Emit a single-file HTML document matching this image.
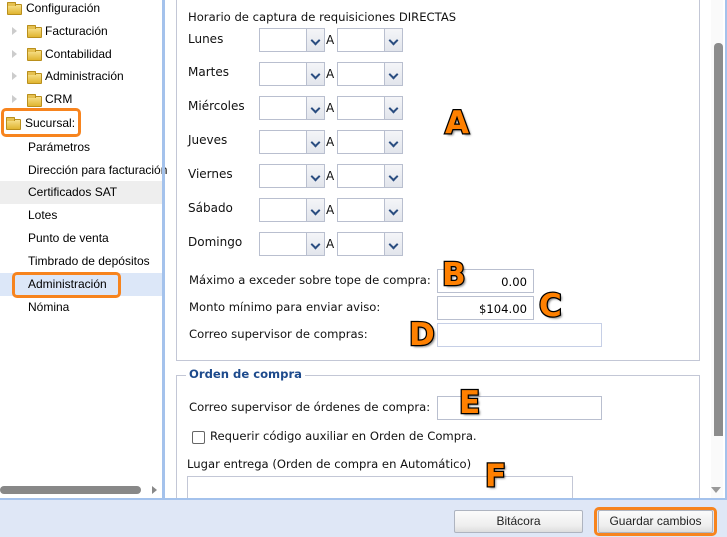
<!DOCTYPE html><html><head><style>
*{margin:0;padding:0;box-sizing:border-box}
body{width:727px;height:537px;overflow:hidden;background:#fff;position:relative;font-family:"Liberation Sans",Arial,sans-serif;font-size:12px;color:#000}
.a{position:absolute;white-space:nowrap}
.f{font-family:"DejaVu Sans",Verdana,sans-serif;font-size:11.6px;color:#111}
.fold{position:absolute;width:15px;height:11px;background:linear-gradient(#f7e08a,#e0b530);border:1px solid #b98f1c;border-radius:1px}
.fold:before{content:"";position:absolute;left:-1px;top:-3px;width:7px;height:3px;background:#e5c050;border:1px solid #b98f1c;border-bottom:none;border-radius:1px 1px 0 0}
.tri{position:absolute;width:0;height:0;border-left:5px solid #ccc;border-top:4px solid transparent;border-bottom:4px solid transparent}
.sel{position:absolute;width:66px;height:24px;border:1px solid #b9bfcf;background:#fff}
.sel i{position:absolute;right:0;top:0;width:18px;height:22px;background:linear-gradient(#f4f5f8,#e2e5ec);border-left:1px solid #b9bfcf}
.sel i:after{content:"";position:absolute;left:5px;top:8px;width:5px;height:5px;border-right:2px solid #2a4d80;border-bottom:2px solid #2a4d80;transform:rotate(45deg)}
.inp{position:absolute;height:24px;border:1px solid #b9bfcf;background:#fff;font-family:"DejaVu Sans",Verdana,sans-serif;font-size:11.6px;text-align:right;padding:5px 6px 0 0}
.L{position:absolute;font:900 31px "DejaVu Sans","Liberation Sans",Arial,sans-serif;color:#ff8000;-webkit-text-stroke:2.5px #000;paint-order:stroke fill;text-shadow:2px 2px 2px rgba(0,0,0,.5);line-height:1}
.ob{position:absolute;border:3px solid #f7841e;border-radius:5px}
.fs{position:absolute;border-style:solid;border-color:#c3c7d6;border-width:1px}
</style></head><body>
<div class="fold" style="left:7px;top:4px"></div><div class="a" style="left:26px;top:1px">Configuración</div>
<div class="tri" style="left:12px;top:27px"></div><div class="fold" style="left:27px;top:27px"></div><div class="a" style="left:45px;top:24px">Facturación</div>
<div class="tri" style="left:12px;top:50px"></div><div class="fold" style="left:27px;top:50px"></div><div class="a" style="left:45px;top:47px">Contabilidad</div>
<div class="tri" style="left:12px;top:72px"></div><div class="fold" style="left:27px;top:73px"></div><div class="a" style="left:45px;top:69px">Administración</div>
<div class="tri" style="left:12px;top:95px"></div><div class="fold" style="left:27px;top:96px"></div><div class="a" style="left:45px;top:92px">CRM</div>
<div class="fold" style="left:6px;top:119px"></div><div class="a" style="left:25px;top:116px">Sucursal:</div>
<div class="ob" style="left:1px;top:108px;width:80px;height:29px"></div>
<div class="a" style="left:28px;top:140px">Parámetros</div>
<div class="a" style="left:28px;top:163px">Dirección para facturación</div>
<div class="a" style="left:0;top:181px;width:163px;height:23px;background:#eeeeee"></div>
<div class="a" style="left:28px;top:185px">Certificados SAT</div>
<div class="a" style="left:28px;top:208px">Lotes</div>
<div class="a" style="left:28px;top:231px">Punto de venta</div>
<div class="a" style="left:28px;top:254px">Timbrado de depósitos</div>
<div class="a" style="left:0;top:273px;width:163px;height:23px;background:#dce7f8"></div>
<div class="a" style="left:28px;top:277px">Administración</div>
<div class="ob" style="left:12px;top:272px;width:109px;height:26px"></div>
<div class="a" style="left:28px;top:300px">Nómina</div>
<div class="a" style="left:0;top:486px;width:141px;height:8px;background:#888;border-radius:4px"></div>
<div class="tri" style="left:152px;top:486px;border-left-color:#888"></div>
<div class="a" style="left:162px;top:0;width:3px;height:500px;background:#a4c2ec"></div>
<div class="fs" style="left:176px;top:-1px;width:524px;height:362px"></div>
<div class="a f" style="left:188px;top:10px">Horario de captura de requisiciones DIRECTAS</div>
<div class="a f" style="left:188px;top:32px;font-size:12px">Lunes</div>
<div class="a f" style="left:188px;top:65px;font-size:12px">Martes</div>
<div class="a f" style="left:188px;top:99px;font-size:12px">Miércoles</div>
<div class="a f" style="left:188px;top:133px;font-size:12px">Jueves</div>
<div class="a f" style="left:188px;top:167px;font-size:12px">Viernes</div>
<div class="a f" style="left:188px;top:201px;font-size:12px">Sábado</div>
<div class="a f" style="left:188px;top:235px;font-size:12px">Domingo</div>
<div class="sel" style="left:259px;top:28px"><i></i></div><div class="a f" style="left:326px;top:33px;font-size:12px">A</div><div class="sel" style="left:337px;top:28px"><i></i></div>
<div class="sel" style="left:259px;top:62px"><i></i></div><div class="a f" style="left:326px;top:67px;font-size:12px">A</div><div class="sel" style="left:337px;top:62px"><i></i></div>
<div class="sel" style="left:259px;top:96px"><i></i></div><div class="a f" style="left:326px;top:101px;font-size:12px">A</div><div class="sel" style="left:337px;top:96px"><i></i></div>
<div class="sel" style="left:259px;top:130px"><i></i></div><div class="a f" style="left:326px;top:135px;font-size:12px">A</div><div class="sel" style="left:337px;top:130px"><i></i></div>
<div class="sel" style="left:259px;top:164px"><i></i></div><div class="a f" style="left:326px;top:169px;font-size:12px">A</div><div class="sel" style="left:337px;top:164px"><i></i></div>
<div class="sel" style="left:259px;top:198px"><i></i></div><div class="a f" style="left:326px;top:203px;font-size:12px">A</div><div class="sel" style="left:337px;top:198px"><i></i></div>
<div class="sel" style="left:259px;top:232px"><i></i></div><div class="a f" style="left:326px;top:237px;font-size:12px">A</div><div class="sel" style="left:337px;top:232px"><i></i></div>
<div class="a f" style="left:189px;top:273px">Máximo a exceder sobre tope de compra:</div>
<div class="inp" style="left:437px;top:269px;width:97px">0.00</div>
<div class="a f" style="left:189px;top:300px">Monto mínimo para enviar aviso:</div>
<div class="inp" style="left:437px;top:296px;width:97px">$104.00</div>
<div class="a f" style="left:189px;top:327px">Correo supervisor de compras:</div>
<div class="inp" style="left:437px;top:323px;width:165px;border-color:#c6cfe6;background:#fff"></div>
<div class="fs" style="left:176px;top:375px;width:524px;height:130px"></div>
<div class="a f" style="left:186px;top:367px;padding:0 3px;background:#fff;color:#1d4a8c;font-weight:bold">Orden de compra</div>
<div class="a f" style="left:189px;top:400px">Correo supervisor de órdenes de compra:</div>
<div class="inp" style="left:437px;top:396px;width:165px"></div>
<div class="a" style="left:192px;top:431px;width:13px;height:13px;border:1px solid #666;border-radius:2px;background:#fff"></div>
<div class="a f" style="left:210px;top:429px">Requerir código auxiliar en Orden de Compra.</div>
<div class="a f" style="left:187px;top:457px">Lugar entrega (Orden de compra en Automático)</div>
<div class="a" style="left:187px;top:476px;width:386px;height:30px;border:1px solid #c3c7d6;background:#fff"></div>
<div class="a" style="left:711px;top:0;width:12px;height:500px;background:#fafafa"></div>
<div class="a" style="left:714px;top:43px;width:9px;height:393px;background:#8c8c8c;border-radius:4px 4px 0 0"></div>
<div class="a" style="left:711px;top:487px;width:0;height:0;border-top:6px solid #999;border-left:5px solid transparent;border-right:5px solid transparent"></div>
<div class="a" style="left:725px;top:0;width:2px;height:500px;background:#a4c2ec"></div>
<div class="a" style="left:0;top:498px;width:727px;height:39px;background:#dfe7f6;border-top:2px solid #a4c2ec"></div>
<div class="a" style="left:454px;top:510px;width:129px;height:23px;border:1px solid #aeb4c0;border-radius:2px;background:linear-gradient(#fbfbfb 0,#eee 70%,#ddd);text-align:center;line-height:21px;color:#222">Bitácora</div>
<div class="a" style="left:598px;top:510px;width:115px;height:23px;border:1px solid #aeb4c0;border-radius:2px;background:linear-gradient(#fbfbfb 0,#eee 70%,#ddd);text-align:center;line-height:21px;color:#222">Guardar cambios</div>
<div class="ob" style="left:594px;top:507px;width:123px;height:29px"></div>
<div class="L" style="left:445px;top:108px">A</div>
<div class="L" style="left:442px;top:260px">B</div>
<div class="L" style="left:539px;top:291px">C</div>
<div class="L" style="left:409px;top:320px">D</div>
<div class="L" style="left:459px;top:388px">E</div>
<div class="L" style="left:485px;top:461px">F</div>
</body></html>
